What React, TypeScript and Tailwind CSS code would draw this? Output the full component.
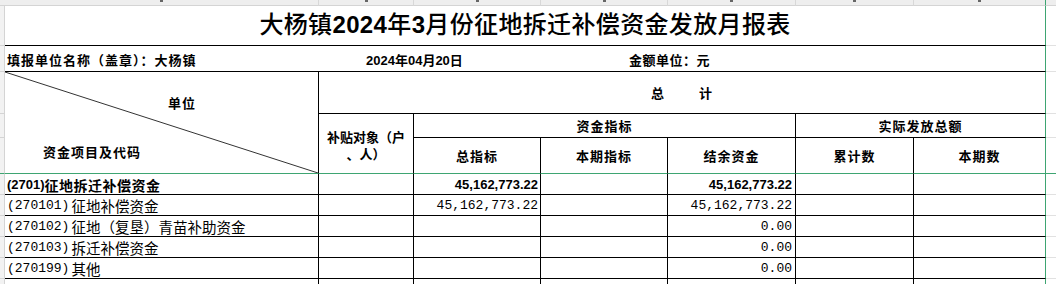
const data = [
  { code: '(2701)', name: '征地拆迁补偿资金', total: '45,162,773.22', balance: '45,162,773.22', bold: true },
  { code: '(270101)', name: '征地补偿资金', total: '45,162,773.22', balance: '45,162,773.22', bold: false },
  { code: '(270102)', name: '征地（复垦）青苗补助资金', total: '', balance: '0.00', bold: false },
  { code: '(270103)', name: '拆迁补偿资金', total: '', balance: '0.00', bold: false },
  { code: '(270199)', name: '其他', total: '', balance: '0.00', bold: false },
];

const sans = "font-['Liberation_Sans','Noto_Sans_CJK_SC',sans-serif]";
const cjk = "font-['Noto_Sans_CJK_SC',sans-serif]";
const mono = "font-['Liberation_Mono','Noto_Sans_CJK_SC',monospace]";

function Stub({ green }: { green?: boolean }) {
  return (
    <div
      className={
        green
          ? 'bg-[#f2f2f2] border-r border-r-[#d4d4d4] border-b border-b-[#3ea572]'
          : 'bg-[#f2f2f2] border-r border-b border-[#d4d4d4]'
      }
    />
  );
}

function Edge({ green }: { green?: boolean }) {
  return <div className={green ? 'border-b border-[#3ea572]' : 'border-b border-[#e1e1e1]'} />;
}

function ColHead({ last }: { last?: boolean }) {
  return (
    <div
      className={
        last
          ? 'flex justify-center bg-[#eeeeee] border-b border-b-[#d4d4d4] border-r border-r-[#3ea572]'
          : 'flex justify-center bg-[#eeeeee] border-b border-b-[#d4d4d4] border-r border-r-[#d8d8d8]'
      }
    >
      <span className="w-[3px] h-[2px] bg-[#666666]" />
    </div>
  );
}

function HeadCell({ children, className }: { children: React.ReactNode; className: string }) {
  return (
    <div
      className={`flex items-center justify-center text-center text-[13px] font-bold tracking-[1px] leading-[17px] text-black ${cjk} ${className}`}
    >
      {children}
    </div>
  );
}

export default function App() {
  return (
    <div className="w-[1056px] h-[284px] overflow-hidden bg-white text-black">
      <div className="grid grid-cols-[5px_314px_95px_127px_127px_128px_118px_132px_10px] grid-rows-[6px_40px_26px_42px_24px_36px_21px_21px_21px_21px_21px_6px]">
        {/* column header strip */}
        <div className="bg-[#eeeeee] border-b border-[#d4d4d4]" />
        <ColHead />
        <ColHead />
        <ColHead />
        <ColHead />
        <ColHead />
        <ColHead />
        <ColHead last />
        <div className="bg-[#eeeeee] border-b border-[#d4d4d4]" />

        {/* title */}
        <Stub />
        <div className={`col-span-7 flex items-center justify-center pb-[1px] border-b border-b-black border-r border-r-[#3ea572] text-[24px] font-medium tracking-[0.35px] leading-none ${sans}`}>
          <span>大杨镇</span>
          <span className="font-bold">2024</span>
          <span>年</span>
          <span className="font-bold">3</span>
          <span>月份征地拆迁补偿资金发放月报表</span>
        </div>
        <Edge />

        {/* info row */}
        <Stub />
        <div className={`col-span-7 flex items-end pb-[2px] border-b border-b-black border-r border-r-[#3ea572] text-[13px] font-bold leading-[17px] ${sans}`}>
          <span className="w-[361px] pl-[2px] tracking-[1px]">填报单位名称（盖章）：大杨镇</span>
          <span className="w-[263px]">2024年04月20日</span>
          <span className="tracking-[0.5px]">金额单位：元</span>
        </div>
        <Edge />

        {/* header row A */}
        <Stub />
        <div className="relative row-span-3 border-r border-r-black border-b border-b-[#3ea572]">
          <svg className="absolute inset-0 w-full h-full" preserveAspectRatio="none">
            <line x1="0" y1="0" x2="100%" y2="100%" stroke="#333333" strokeWidth="1" />
          </svg>
          <div className={`relative flex flex-col items-start text-[13px] font-bold tracking-[1px] leading-[18px] ${cjk}`}>
            <span className="ml-[163px] mt-[22px]">单位</span>
            <span className="ml-[38px] mt-[31px]">资金项目及代码</span>
          </div>
        </div>
        <HeadCell className="col-span-6 gap-[34px] border-b border-b-black border-r border-r-[#3ea572]">
          <span>总</span>
          <span>计</span>
        </HeadCell>
        <Edge />

        {/* header row B */}
        <Stub />
        <HeadCell className="row-span-2 flex-col border-r border-r-black border-b border-b-[#3ea572] pt-[2px] whitespace-nowrap">
          <span className="tracking-[0px]">补贴对象（户</span>
          <span className="tracking-[0px]">、人）</span>
        </HeadCell>
        <HeadCell className="col-span-3 border-r border-b border-black">资金指标</HeadCell>
        <HeadCell className="col-span-2 border-b border-b-black border-r border-r-[#3ea572]">实际发放总额</HeadCell>
        <Edge />

        {/* header row C */}
        <Stub green />
        <HeadCell className="border-r border-r-black border-b border-b-[#3ea572]">总指标</HeadCell>
        <HeadCell className="border-r border-r-black border-b border-b-[#3ea572]">本期指标</HeadCell>
        <HeadCell className="border-r border-r-black border-b border-b-[#3ea572]">结余资金</HeadCell>
        <HeadCell className="border-r border-r-black border-b border-b-[#3ea572]">累计数</HeadCell>
        <HeadCell className="border-r border-r-[#3ea572] border-b border-b-[#3ea572]">本期数</HeadCell>
        <Edge green />

        {/* data rows */}
        {data.map((r) => (
          <Row key={r.code} r={r} />
        ))}

        {/* partial row */}
        <div className="bg-[#f2f2f2] border-r border-[#d4d4d4]" />
        <div className="border-r border-black" />
        <div className="border-r border-black" />
        <div className="border-r border-black" />
        <div className="border-r border-black" />
        <div className="border-r border-black" />
        <div className="border-r border-black" />
        <div className="border-r border-[#3ea572]" />
        <div />
      </div>
    </div>
  );
}

function Row({ r }: { r: (typeof data)[number] }) {
  const num = r.bold
    ? `text-[13px] font-bold leading-[16px] ${sans}`
    : `text-[13px] leading-[16px] ${mono}`;
  return (
    <>
      <Stub />
      <div className="flex items-end pl-[2px] pb-[1px] border-r border-b border-black whitespace-nowrap">
        {r.bold ? (
          <>
            <span className={`text-[13px] font-bold leading-[16px] ${sans}`}>{r.code}</span>
            <span className={`text-[14px] font-bold tracking-[0.5px] leading-[16px] ${cjk}`}>{r.name}</span>
          </>
        ) : (
          <>
            <span className={`text-[13px] leading-[16px] ${mono}`}>{r.code}</span>
            <span className={`ml-[2px] text-[14.5px] leading-[16px] ${cjk}`}>{r.name}</span>
          </>
        )}
      </div>
      <div className="border-r border-b border-black" />
      <div className="flex items-end justify-end pr-[2px] pb-[1px] border-r border-b border-black">
        <span className={num}>{r.total}</span>
      </div>
      <div className="border-r border-b border-black" />
      <div className="flex items-end justify-end pr-[3px] pb-[1px] border-r border-b border-black">
        <span className={num}>{r.balance}</span>
      </div>
      <div className="border-r border-b border-black" />
      <div className="border-b border-b-black border-r border-r-[#3ea572]" />
      <Edge />
    </>
  );
}
